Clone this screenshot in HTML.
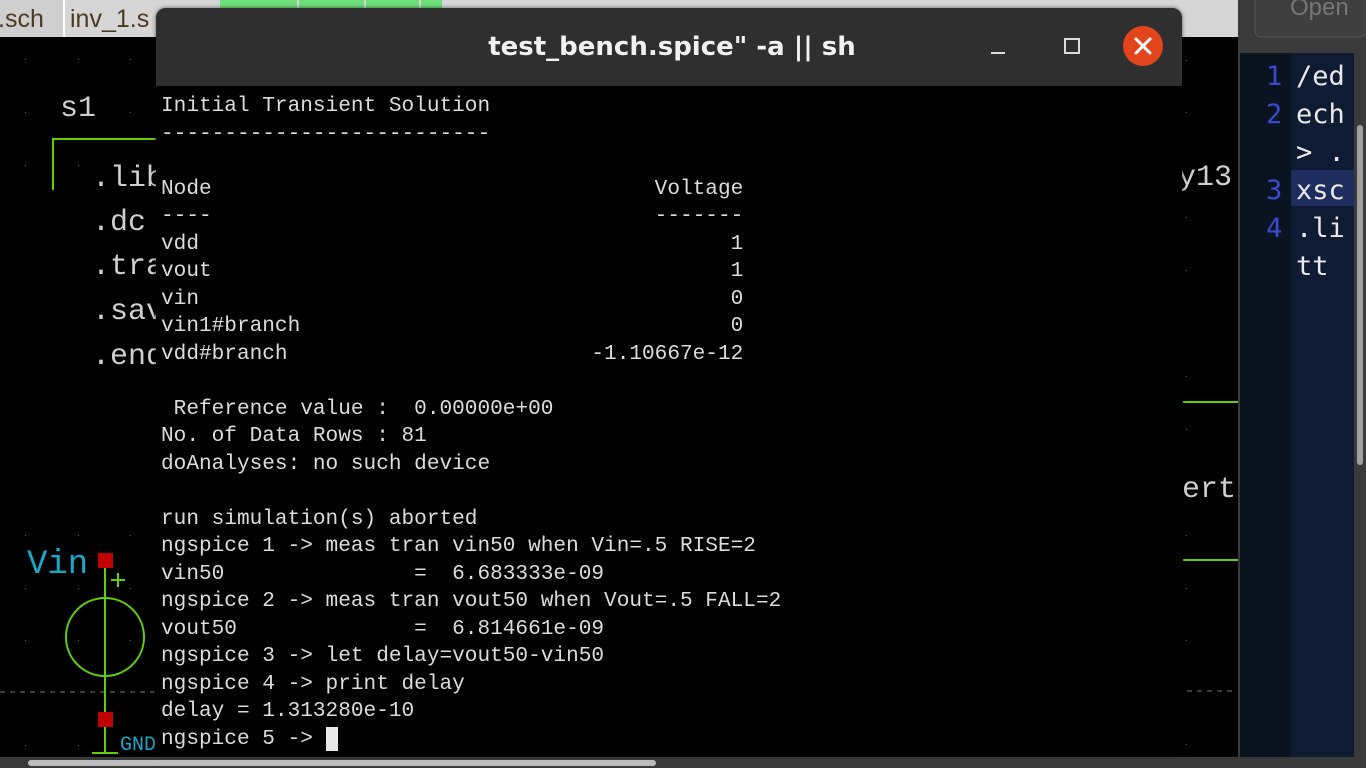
<!DOCTYPE html>
<html><head><meta charset="utf-8"><style>
html,body{margin:0;padding:0;width:1366px;height:768px;overflow:hidden;background:#000;font-family:"Liberation Sans",sans-serif}
.abs{position:absolute}
pre{margin:0;font-family:"Liberation Mono",monospace;font-size:21.1px;line-height:27.5px;color:#dcdcdc}
</style></head><body>
<svg class="abs" style="left:0;top:0" width="1366" height="768">
<rect x="0" y="0" width="1366" height="768" fill="#000"/>
<rect x="0" y="0" width="1240" height="37" fill="#d6d6d6"/>
<rect x="0" y="0" width="64" height="37" fill="#cfcfcf"/>
<line x1="64" y1="0" x2="64" y2="37" stroke="#fff" stroke-width="2"/>
<rect x="220" y="0" width="222" height="8" fill="#6de07a"/>
<path d="M298 0v8M365 0v8M420 0v8" stroke="#d6d6d6" stroke-width="2"/>
<text x="-2" y="27" font-size="25" fill="#4a3a20" font-family="Liberation Sans">.sch</text>
<text x="70" y="27" font-size="25" fill="#4a3a20" font-family="Liberation Sans">inv_1.s</text>
<g fill="#666">
<rect x="25" y="59" width="1" height="1"/><rect x="78" y="59" width="1" height="1"/><rect x="130" y="59" width="1" height="1"/>
<rect x="25" y="112" width="1" height="1"/><rect x="130" y="112" width="1" height="1"/>
<rect x="25" y="165" width="1" height="1"/><rect x="78" y="165" width="1" height="1"/>
<rect x="25" y="535" width="1" height="1"/><rect x="78" y="535" width="1" height="1"/><rect x="130" y="535" width="1" height="1"/>
<rect x="25" y="588" width="1" height="1"/><rect x="78" y="588" width="1" height="1"/><rect x="130" y="588" width="1" height="1"/>
<rect x="25" y="640" width="1" height="1"/><rect x="78" y="640" width="1" height="1"/><rect x="130" y="640" width="1" height="1"/>
<rect x="25" y="745" width="1" height="1"/><rect x="78" y="745" width="1" height="1"/>
<rect x="1186" y="60" width="1" height="1"/><rect x="1186" y="112" width="1" height="1"/><rect x="1186" y="217" width="1" height="1"/><rect x="1186" y="270" width="1" height="1"/>
<rect x="1186" y="376" width="1" height="1"/><rect x="1186" y="429" width="1" height="1"/><rect x="1186" y="535" width="1" height="1"/><rect x="1186" y="588" width="1" height="1"/><rect x="1186" y="640" width="1" height="1"/><rect x="1186" y="744" width="1" height="1"/>
</g>
<g font-family="Liberation Mono" fill="#cfcfcf" font-size="30">
<text x="60" y="116">s1</text>
<text x="92" y="186">.lib</text>
<text x="92" y="230">.dc</text>
<text x="92" y="274">.tra</text>
<text x="92" y="319">.sav</text>
<text x="92" y="364">.end</text>
<text x="1178" y="185">y13</text>
<text x="1182" y="497">ert</text>
</g>
<polyline points="53,190 53,139 160,139" fill="none" stroke="#5fd000" stroke-width="2"/>
<line x1="1183" y1="402" x2="1240" y2="402" stroke="#5fd000" stroke-width="2"/>
<line x1="1183" y1="560" x2="1240" y2="560" stroke="#5fd000" stroke-width="2"/>
<line x1="0" y1="692" x2="160" y2="692" stroke="#777" stroke-dasharray="5,5"/>
<line x1="1187" y1="691" x2="1235" y2="691" stroke="#777" stroke-dasharray="5,5"/>
<text x="27" y="573" font-family="Liberation Mono" font-size="34" fill="#1aa6c8">Vin</text>
<text x="120" y="750" font-family="Liberation Mono" font-size="20" fill="#1aa6c8">GND</text>
<line x1="105" y1="560" x2="105" y2="752" stroke="#5fd000" stroke-width="2"/>
<circle cx="105" cy="637" r="39" fill="none" stroke="#5fd000" stroke-width="2"/>
<path d="M111 580h14M118 573v14" stroke="#5fd000" stroke-width="2"/>
<line x1="92" y1="753" x2="118" y2="753" stroke="#5fd000" stroke-width="2"/>
<rect x="98" y="553" width="15" height="15" fill="#c00000"/>
<rect x="98" y="712" width="15" height="15" fill="#c00000"/>
<rect x="1238" y="0" width="128" height="768" fill="#3a3a3a"/>
<rect x="1255" y="-10" width="111" height="47" rx="6" fill="#3f3f3f" stroke="#555"/>
<text x="1290" y="15" font-size="24" fill="#777">Open</text>
<rect x="1240" y="53" width="51" height="704" fill="#0a1420"/>
<rect x="1291" y="53" width="63" height="704" fill="#0f1b33"/>
<rect x="1291" y="170" width="63" height="36" fill="#1f2d5e"/>
<rect x="1357" y="125" width="6" height="340" rx="3" fill="#a0a0a0"/>
<g font-family="DejaVu Sans Mono" font-size="27">
<g fill="#3b4ad0"><text x="1266" y="85">1</text><text x="1266" y="123">2</text><text x="1266" y="199">3</text><text x="1266" y="237">4</text></g>
<g fill="#eaeaea"><text x="1296" y="85">/ed</text><text x="1296" y="123">ech</text><text x="1296" y="161">&gt; .</text><text x="1296" y="199">xsc</text><text x="1296" y="237">.li</text><text x="1296" y="275">tt</text></g>
</g>
<rect x="0" y="757" width="1366" height="11" fill="#3a3a3a"/>
<rect x="28" y="760" width="628" height="6" rx="3" fill="#bdbdbd"/>
</svg>
<div class="abs" style="left:156px;top:8px;width:1026px;height:748px;background:#000;border-radius:10px 10px 0 0;overflow:hidden;box-shadow:0 0 4px rgba(0,0,0,.6)">
 <div style="height:78px;background:#2f2f2f;position:relative">
  <div class="abs" style="left:0;width:1026px;top:24px;text-align:center;color:#f2f2f2;font-weight:bold;font-size:26px;font-family:'DejaVu Sans',sans-serif;padding-left:6px;box-sizing:border-box">test_bench.spice" -a || sh</div>
  <div class="abs" style="left:835px;top:44px;width:14px;height:2px;background:#ddd"></div>
  <div class="abs" style="left:908px;top:30px;width:12px;height:12px;border:2px solid #ddd"></div>
  <div class="abs" style="left:967px;top:18px;width:40px;height:40px;border-radius:50%;background:#e2441c"></div>
  <svg class="abs" style="left:967px;top:18px" width="40" height="40"><path d="M13 13L27 27M27 13L13 27" stroke="#fff" stroke-width="3" stroke-linecap="round"/></svg>
 </div>
 <pre style="position:absolute;left:5px;top:85px">Initial Transient Solution
--------------------------

Node                                   Voltage
----                                   -------
vdd                                          1
vout                                         1
vin                                          0
vin1#branch                                  0
vdd#branch                        -1.10667e-12

 Reference value :  0.00000e+00
No. of Data Rows : 81
doAnalyses: no such device

run simulation(s) aborted
ngspice 1 -> meas tran vin50 when Vin=.5 RISE=2
vin50               =  6.683333e-09
ngspice 2 -> meas tran vout50 when Vout=.5 FALL=2
vout50              =  6.814661e-09
ngspice 3 -> let delay=vout50-vin50
ngspice 4 -> print delay
delay = 1.313280e-10
ngspice 5 -> <span style="background:#e8e8e8"> </span></pre>
</div>
</body></html>
